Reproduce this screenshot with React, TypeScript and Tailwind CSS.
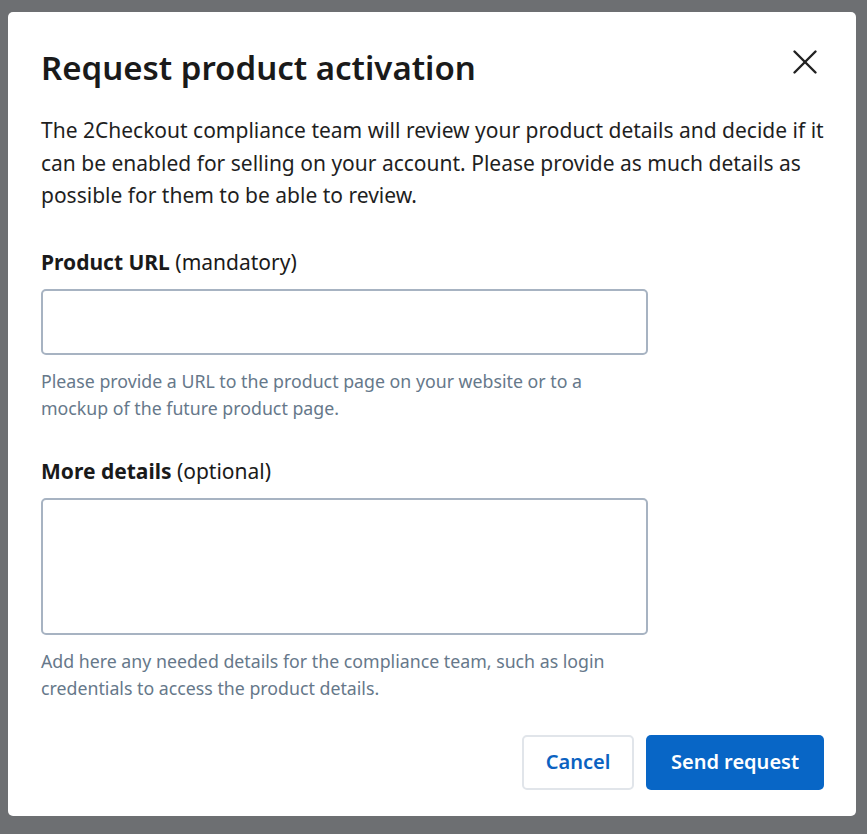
import { X } from "lucide-react";

function Field({
  label,
  note,
  help,
  tall,
}: {
  label: string;
  note: string;
  help: string;
  tall?: boolean;
}) {
  return (
    <div className="flex flex-col">
      <label className="text-[21px] leading-[28px] text-[#1a1a1a]">
        <span className="font-bold">{label}</span> {note}
      </label>
      {tall ? (
        <textarea className="mt-[13px] w-[607px] h-[137px] rounded-[5px] border-2 border-[#a7b3c2] resize-none outline-none" />
      ) : (
        <input className="mt-[13px] w-[607px] h-[66px] rounded-[5px] border-2 border-[#a7b3c2] outline-none" />
      )}
      <p className="mt-[13px] w-[575px] text-[17.75px] leading-[27px] text-[#66788a]">{help}</p>
    </div>
  );
}

export default function App() {
  return (
    <div
      className="w-[867px] h-[834px] bg-[#6d6f72] pt-[12px] pl-[8px]"
      style={{ fontFamily: '"Noto Sans", "Open Sans", sans-serif' }}
    >
      <div className="w-[848px] h-[804px] bg-white rounded-[5px] pl-[33px] pr-[32px] pt-[34px] flex flex-col">
        <div className="flex items-start justify-between">
          <h1 className="text-[33px] leading-[44px] font-semibold text-[#1a1a1a]">
            Request product activation
          </h1>
          <button className="mt-[-5px] mr-[-2px] text-[#222]" aria-label="close">
            <X size={42} strokeWidth={1.4} />
          </button>
        </div>
        <p className="mt-[24px] text-[21px] leading-[32.5px] text-[#1f1f1f]">
          The 2Checkout compliance team will review your product details and decide if it can be
          enabled for selling on your account. Please provide as much details as possible for them
          to be able to review.
        </p>
        <div className="mt-[36px] flex flex-col gap-[35px]">
          <Field
            label="Product URL"
            note="(mandatory)"
            help="Please provide a URL to the product page on your website or to a mockup of the future product page."
          />
          <Field
            label="More details"
            note="(optional)"
            help="Add here any needed details for the compliance team, such as login credentials to access the product details."
            tall
          />
        </div>
        <div className="mt-[33px] flex justify-end gap-[12px]">
          <button className="w-[112px] h-[55px] rounded-[5px] border-2 border-[#e1e5ea] text-[20px] font-semibold text-[#0b62c1]">
            Cancel
          </button>
          <button className="w-[178px] h-[55px] rounded-[5px] bg-[#0866c6] text-[20px] font-semibold text-white">
            Send request
          </button>
        </div>
      </div>
    </div>
  );
}
